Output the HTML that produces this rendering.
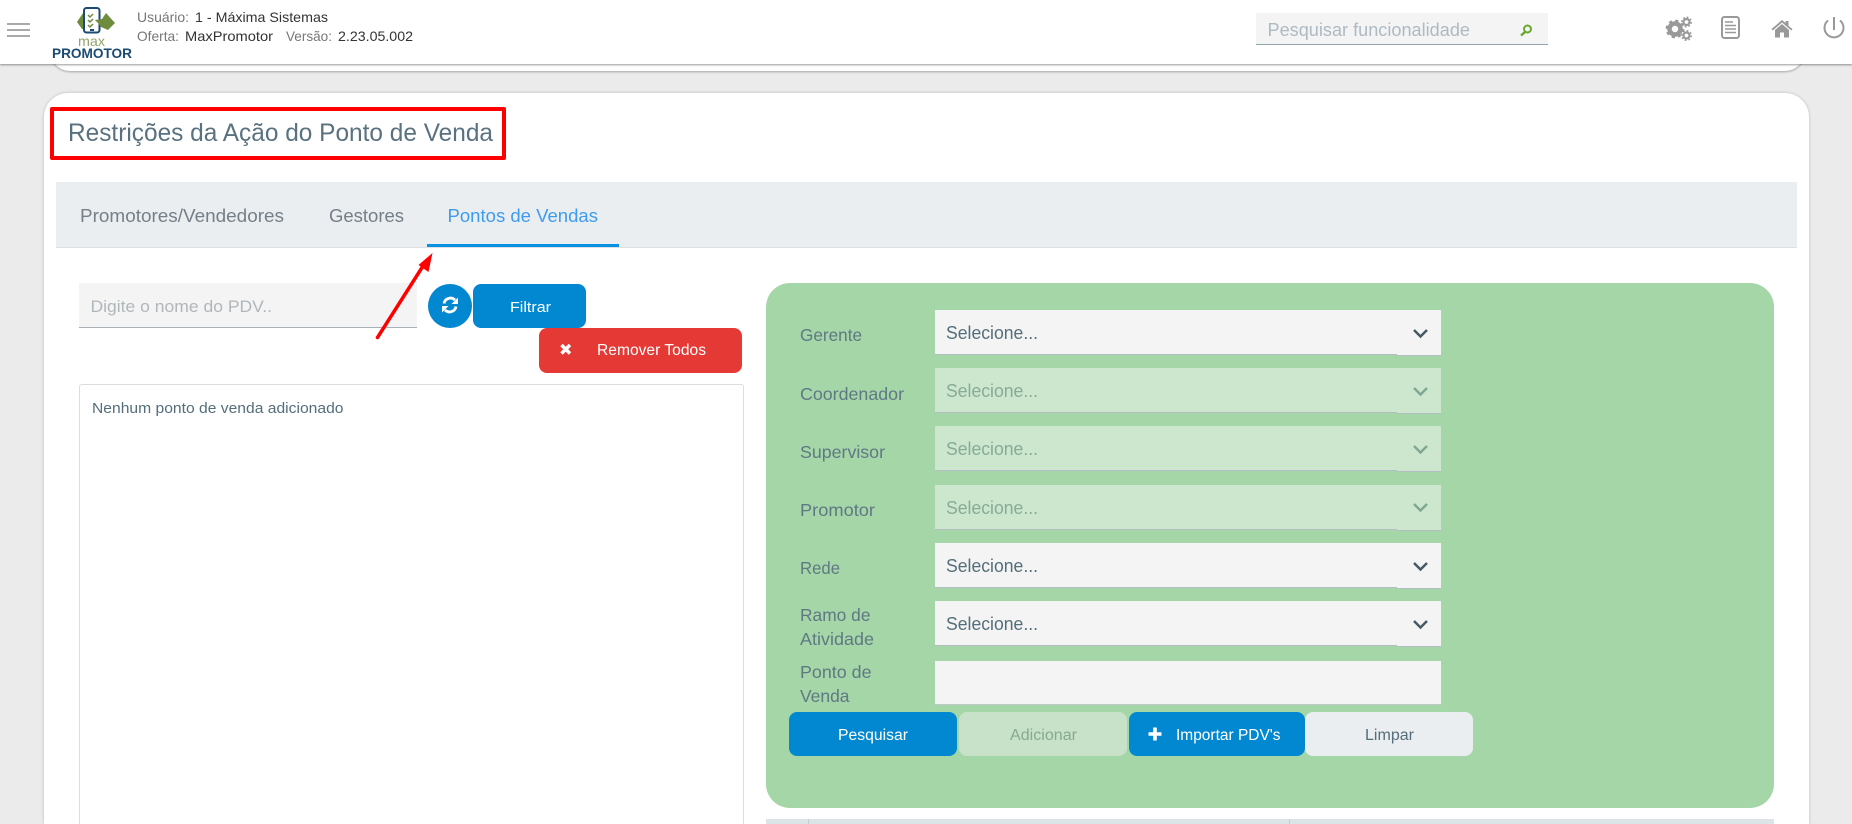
<!DOCTYPE html>
<html lang="pt-BR"><head><meta charset="utf-8"><title>Restrições da Ação do Ponto de Venda</title>
<style>
html,body{margin:0;padding:0;width:1852px;height:824px;overflow:hidden;background:#ebebeb;font-family:"Liberation Sans",sans-serif}
#w{position:relative;width:1852px;height:824px;overflow:hidden;background:#ebebeb}
.a{position:absolute;box-sizing:border-box}
.sel{position:absolute;left:935px;width:506px;height:44px;background:#f4f4f4;border-bottom:1px solid #b4bcc4}
.sel.d{background:#cde7ce}
.sel:after{content:"";position:absolute;right:0;top:0;width:44px;height:45px;background:inherit;border-bottom:1px solid #b4bcc4}
svg.o{position:absolute;left:0;top:0}
text{font-family:"Liberation Sans",sans-serif}
</style></head><body><div id="w">
<div class="a" style="left:50px;top:40px;width:1755px;height:31px;background:#fff;border-radius:0 0 20px 20px;box-shadow:0 1px 2px rgba(0,0,0,.3)"></div>
<div class="a" style="left:0;top:0;width:1852px;height:64px;background:#fff;box-shadow:0 1px 2px rgba(0,0,0,.4)"></div>
<div class="a" style="left:44px;top:93px;width:1765px;height:731px;background:#fff;border-radius:24px 24px 0 0;box-shadow:0 0 3px rgba(0,0,0,.2)"></div>
<div class="a" style="left:50px;top:107px;width:456px;height:53px;border:4px solid #f00;border-radius:2px"></div>
<div class="a" style="left:56px;top:182px;width:1741px;height:66px;background:#ebeef1;border-bottom:1px solid #dde1e4"></div>
<div class="a" style="left:427px;top:244px;width:192px;height:3px;background:#0a90e0"></div>
<div class="a" style="left:1256px;top:13px;width:292px;height:32px;background:#f4f4f4;border-bottom:1px solid #90a4ae"></div>
<div class="a" style="left:79px;top:283px;width:338px;height:45px;background:#f4f4f4;border-bottom:1px solid #aab2b8"></div>
<div class="a" style="left:428px;top:284px;width:44px;height:44px;background:#0288d1;border-radius:50%"></div>
<div class="a" style="left:473px;top:284px;width:113px;height:44px;background:#0288d1;border-radius:8px"></div>
<div class="a" style="left:539px;top:328px;width:203px;height:45px;background:#e53935;border-radius:8px"></div>
<div class="a" style="left:79px;top:384px;width:665px;height:460px;background:#fff;border:1px solid #ddd;border-radius:3px"></div>
<div class="a" style="left:766px;top:283px;width:1008px;height:525px;background:#a5d6a7;border-radius:24px"></div>
<div class="sel" style="top:310px"></div>
<div class="sel d" style="top:368px"></div>
<div class="sel d" style="top:426px"></div>
<div class="sel d" style="top:485px"></div>
<div class="sel" style="top:543px"></div>
<div class="sel" style="top:601px"></div>
<div class="a" style="left:935px;top:661px;width:506px;height:44px;background:#f4f4f4;border-bottom:1px solid #c0c8cc"></div>
<div class="a" style="left:789px;top:712px;width:168px;height:44px;background:#0288d1;border-radius:8px"></div>
<div class="a" style="left:959px;top:712px;width:168px;height:44px;background:#c8e2ca;border-radius:8px"></div>
<div class="a" style="left:1129px;top:712px;width:176px;height:44px;background:#0288d1;border-radius:8px"></div>
<div class="a" style="left:1305px;top:712px;width:168px;height:44px;background:#ebeef1;border-radius:8px"></div>
<div class="a" style="left:766px;top:819px;width:1008px;height:5px;background:#dde4e8"></div>
<div class="a" style="left:808px;top:819px;width:1px;height:5px;background:#c4cdd2"></div>
<div class="a" style="left:1289px;top:819px;width:1px;height:5px;background:#c4cdd2"></div>

<svg class="o" width="1852" height="824" viewBox="0 0 1852 824" xmlns="http://www.w3.org/2000/svg">
<!-- hamburger -->
<g fill="#aaa"><rect x="7" y="23" width="23" height="2"/><rect x="7" y="29" width="23" height="2"/><rect x="7" y="35" width="23" height="2"/></g>
<!-- logo -->
<path d="M77 22l6-9 4 1v15l-5 0z" fill="#6f8c3e"/>
<rect x="84" y="8" width="15.500" height="24.500" rx="2.500" fill="#fff" stroke="#1b4a72" stroke-width="2"/>
<rect x="90" y="29" width="4" height="2" fill="#1b4a72"/>
<g fill="none" stroke="#6f8c3e" stroke-width="1.500"><path d="M88 15l2 2 3-3M88 20l2 2 3-3M88 25l2 2 3-3"/></g>
<path d="M95 20l7-1 4-6 9 10-7 7-7-3-3-4z" fill="#6f8c3e"/>
<text x="78" y="46" font-size="14" fill="#93a56d" textLength="27" lengthAdjust="spacingAndGlyphs">max</text>
<text x="52" y="58" font-size="14" font-weight="700" fill="#1b4a72" textLength="80" lengthAdjust="spacingAndGlyphs">PROMOTOR</text>
<!-- header text -->
<g font-size="14">
<text x="137" y="22" fill="#777" textLength="52" lengthAdjust="spacingAndGlyphs">Usuário:</text>
<text x="195" y="22" fill="#333" textLength="133" lengthAdjust="spacingAndGlyphs">1 - Máxima Sistemas</text>
<text x="137" y="41" fill="#777" textLength="42" lengthAdjust="spacingAndGlyphs">Oferta:</text>
<text x="185" y="41" fill="#333" textLength="88" lengthAdjust="spacingAndGlyphs">MaxPromotor</text>
<text x="286" y="41" fill="#777" textLength="46" lengthAdjust="spacingAndGlyphs">Versão:</text>
<text x="338" y="41" fill="#333" textLength="75" lengthAdjust="spacingAndGlyphs">2.23.05.002</text>
</g>
<text x="1267.500" y="36" font-size="18" fill="#aebac3" textLength="202.500" lengthAdjust="spacingAndGlyphs">Pesquisar funcionalidade</text>
<!-- search icon -->
<circle cx="1527.500" cy="29" r="3.500" fill="none" stroke="#6aa82e" stroke-width="2"/><path d="M1525 32l-4 3.500" stroke="#6aa82e" stroke-width="2.400"/>
<!-- gears -->
<circle cx="1675" cy="29" r="5.500" fill="none" stroke="#999" stroke-width="4.500"/>
<circle cx="1675" cy="29" r="8.300" fill="none" stroke="#999" stroke-width="2.200" stroke-dasharray="3.200 3.320"/>
<circle cx="1686.500" cy="22" r="3" fill="none" stroke="#999" stroke-width="2.200"/>
<circle cx="1686.500" cy="22" r="4.800" fill="none" stroke="#999" stroke-width="1.400" stroke-dasharray="1.800 1.970"/>
<circle cx="1686.500" cy="35.500" r="3" fill="none" stroke="#999" stroke-width="2.200"/>
<circle cx="1686.500" cy="35.500" r="4.800" fill="none" stroke="#999" stroke-width="1.400" stroke-dasharray="1.800 1.970"/>
<!-- doc -->
<rect x="1722" y="17" width="17" height="21" rx="2.500" fill="none" stroke="#999" stroke-width="2"/>
<path d="M1725 22h8M1725 25.500h11M1725 29h11M1725 32.500h11" stroke="#999" stroke-width="1.500" fill="none"/>
<!-- home -->
<path d="M1771.500 29l10.500-9 3.500 3v-2h3v5l4 3-1.200 1.500-9.300-8-9.300 8z" fill="#999"/>
<path d="M1775 30l7-6 7 6v7.500h-5v-5h-4v5h-5z" fill="#999"/>
<!-- power -->
<path d="M1828 20.500a9.500 9.500 0 1 0 12 0" fill="none" stroke="#999" stroke-width="2"/>
<path d="M1834 17v13" stroke="#999" stroke-width="2"/>
<!-- title -->
<text x="68" y="141" font-size="25" fill="#5a7280" textLength="425" lengthAdjust="spacingAndGlyphs">Restrições da Ação do Ponto de Venda</text>
<!-- tabs -->
<text x="80" y="222" font-size="18" fill="#747f87" textLength="204" lengthAdjust="spacingAndGlyphs">Promotores/Vendedores</text>
<text x="329" y="222" font-size="18" fill="#747f87" textLength="75" lengthAdjust="spacingAndGlyphs">Gestores</text>
<text x="447.500" y="222" font-size="18" fill="#3d9cf0" textLength="150.500" lengthAdjust="spacingAndGlyphs">Pontos de Vendas</text>
<!-- left -->
<text x="90.500" y="312" font-size="17" fill="#b0b7bb" textLength="181.500" lengthAdjust="spacingAndGlyphs">Digite o nome do PDV..</text>
<path d="M444 303.500a6.500 6.500 0 0 1 11-3.500M456 306.500a6.500 6.500 0 0 1-11 3.500" fill="none" stroke="#fff" stroke-width="2.800"/>
<path d="M458 297.500v6.500h-6.500zM442 312.500v-6.500h6.500z" fill="#fff"/>
<text x="510" y="312" font-size="15" fill="#fff" textLength="41" lengthAdjust="spacingAndGlyphs">Filtrar</text>
<path d="M561.500 345l8.500 8.500M570 345l-8.500 8.500" stroke="#fff" stroke-width="3.400" fill="none"/>
<text x="597" y="355" font-size="15.500" fill="#fff" textLength="109" lengthAdjust="spacingAndGlyphs">Remover Todos</text>
<text x="92" y="413" font-size="15" fill="#546e7a" textLength="251.500" lengthAdjust="spacingAndGlyphs">Nenhum ponto de venda adicionado</text>
<!-- arrow -->
<path d="M377.500 337.500L423 266" stroke="#f00" stroke-width="3.500" stroke-linecap="round" fill="none"/>
<path d="M432.500 253l-14 12 10 7z" fill="#f00"/>
<!-- labels -->
<g font-size="17.500" fill="#5f7884">
<text x="800" y="341" textLength="62" lengthAdjust="spacingAndGlyphs">Gerente</text>
<text x="800" y="400" textLength="104" lengthAdjust="spacingAndGlyphs">Coordenador</text>
<text x="800" y="458" textLength="85" lengthAdjust="spacingAndGlyphs">Supervisor</text>
<text x="800" y="516" textLength="75" lengthAdjust="spacingAndGlyphs">Promotor</text>
<text x="800" y="574" textLength="40" lengthAdjust="spacingAndGlyphs">Rede</text>
<text x="800" y="621" textLength="70.500" lengthAdjust="spacingAndGlyphs">Ramo de</text>
<text x="800" y="645" textLength="74" lengthAdjust="spacingAndGlyphs">Atividade</text>
<text x="800" y="678" textLength="71.500" lengthAdjust="spacingAndGlyphs">Ponto de</text>
<text x="800" y="702" textLength="49.500" lengthAdjust="spacingAndGlyphs">Venda</text>
</g>
<!-- selects -->
<g font-size="18">
<text x="946" y="339" fill="#546e7a" textLength="92" lengthAdjust="spacingAndGlyphs">Selecione...</text>
<text x="946" y="397" fill="#86ab96" textLength="92" lengthAdjust="spacingAndGlyphs">Selecione...</text>
<text x="946" y="455" fill="#86ab96" textLength="92" lengthAdjust="spacingAndGlyphs">Selecione...</text>
<text x="946" y="514" fill="#86ab96" textLength="92" lengthAdjust="spacingAndGlyphs">Selecione...</text>
<text x="946" y="572" fill="#546e7a" textLength="92" lengthAdjust="spacingAndGlyphs">Selecione...</text>
<text x="946" y="630" fill="#546e7a" textLength="92" lengthAdjust="spacingAndGlyphs">Selecione...</text>
</g>
<g fill="none" stroke-width="2.500">
<path d="M1414 330l6.500 6.500 6.500-6.500" stroke="#455a64"/>
<path d="M1414 388l6.500 6.500 6.500-6.500" stroke="#7fa793"/>
<path d="M1414 446l6.500 6.500 6.500-6.500" stroke="#7fa793"/>
<path d="M1414 504l6.500 6.500 6.500-6.500" stroke="#7fa793"/>
<path d="M1414 563l6.500 6.500 6.500-6.500" stroke="#455a64"/>
<path d="M1414 621l6.500 6.500 6.500-6.500" stroke="#455a64"/>
</g>
<!-- buttons -->
<g font-size="15.500">
<text x="838" y="740" fill="#fff" textLength="70" lengthAdjust="spacingAndGlyphs">Pesquisar</text>
<text x="1010" y="740" fill="#86a98f" textLength="67" lengthAdjust="spacingAndGlyphs">Adicionar</text>
<text x="1176" y="740" fill="#fff" textLength="104.500" lengthAdjust="spacingAndGlyphs">Importar PDV's</text>
<text x="1365" y="740" fill="#546e7a" textLength="49" lengthAdjust="spacingAndGlyphs">Limpar</text>
</g>
<path d="M1148.500 734h13M1155 727.500v13" stroke="#fff" stroke-width="3.600"/>
</svg>
</div></body></html>
